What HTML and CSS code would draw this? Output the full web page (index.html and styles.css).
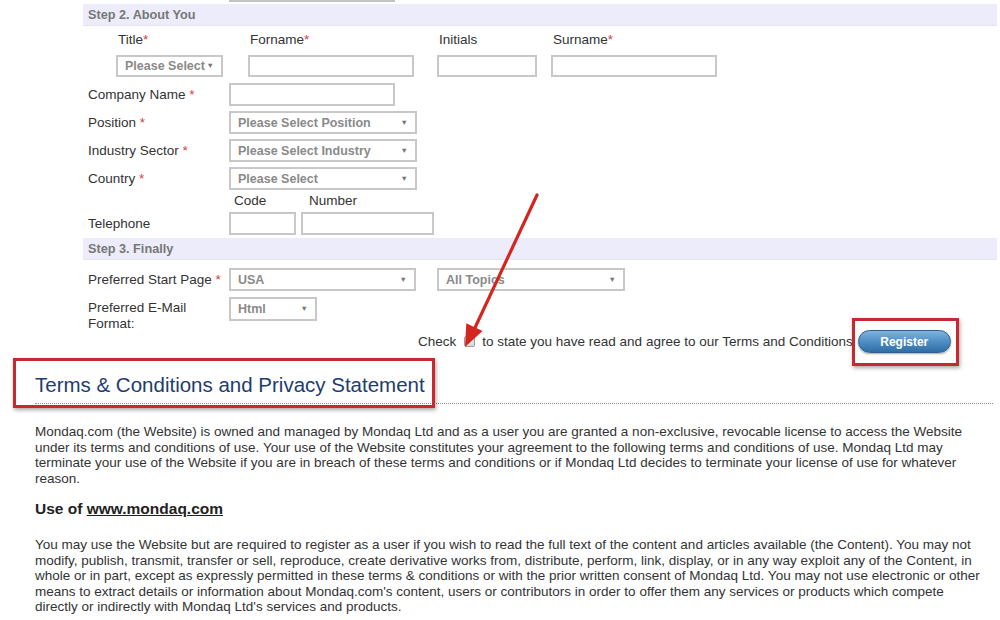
FILE: index.html
```html
<!DOCTYPE html>
<html lang="en">
<head>
<meta charset="utf-8">
<title>Register - Mondaq</title>
<link rel="stylesheet" href="styles.css">
</head>
<body>
<div class="page">
  <div class="form">
    <div class="cut-row"><span class="cut-input"></span></div>

    <div class="step">Step 2. About You</div>

    <div class="name-block">
      <div class="name-col col-title">
        <div class="name-label">Title<span class="req">*</span></div>
        <div class="select sel-title"><span class="sel-text">Please Select</span><span class="caret">&#9660;</span></div>
      </div>
      <div class="name-col col-forname">
        <div class="name-label">Forname<span class="req">*</span></div>
        <div class="input w166"></div>
      </div>
      <div class="name-col col-initials">
        <div class="name-label">Initials</div>
        <div class="input w100"></div>
      </div>
      <div class="name-col col-surname">
        <div class="name-label">Surname<span class="req">*</span></div>
        <div class="input w166"></div>
      </div>
    </div>

    <div class="row r-company">
      <div class="label">Company Name <span class="req">*</span></div>
      <div class="input w166"></div>
    </div>
    <div class="row">
      <div class="label">Position <span class="req">*</span></div>
      <div class="select w188"><span class="sel-text">Please Select Position</span><span class="caret">&#9660;</span></div>
    </div>
    <div class="row">
      <div class="label">Industry Sector <span class="req">*</span></div>
      <div class="select w188"><span class="sel-text">Please Select Industry</span><span class="caret">&#9660;</span></div>
    </div>
    <div class="row">
      <div class="label">Country <span class="req">*</span></div>
      <div class="select w188"><span class="sel-text">Please Select</span><span class="caret">&#9660;</span></div>
    </div>

    <div class="phone-labels">
      <span class="pl-code">Code</span>
      <span class="pl-number">Number</span>
    </div>
    <div class="row r-phone">
      <div class="label">Telephone</div>
      <div class="phone">
        <div class="input w67"></div>
        <div class="input w133"></div>
      </div>
    </div>

    <div class="step step3">Step 3. Finally</div>

    <div class="row r-start">
      <div class="label">Preferred Start Page <span class="req">*</span></div>
      <div class="pair">
        <div class="select w187"><span class="sel-text">USA</span><span class="caret">&#9660;</span></div>
        <div class="select w188"><span class="sel-text">All Topics</span><span class="caret">&#9660;</span></div>
      </div>
    </div>
    <div class="row r-email">
      <div class="label two">Preferred E-Mail Format:</div>
      <div class="select w88"><span class="sel-text">Html</span><span class="caret">&#9660;</span></div>
    </div>

    <div class="check-row">
      <span>Check</span>
      <span class="checkbox"></span>
      <span>to state you have read and agree to our Terms and Conditions</span>
      <span class="btn-wrap">
        <button class="register" type="button">Register</button>
        <span class="mark mark-btn"></span>
      </span>
    </div>
  </div>

  <div class="terms">
    <h1 class="terms-title"><span>Terms &amp; Conditions and Privacy Statement</span><span class="mark mark-title"></span></h1>
    <p>Mondaq.com (the Website) is owned and managed by Mondaq Ltd and as a user you are granted a non-exclusive, revocable license to access the Website under its terms and conditions of use. Your use of the Website constitutes your agreement to the following terms and conditions of use. Mondaq Ltd may terminate your use of the Website if you are in breach of these terms and conditions or if Mondaq Ltd decides to terminate your license of use for whatever reason.</p>
    <h2 class="sub">Use of <a href="#">www.mondaq.com</a></h2>
    <p>You may use the Website but are required to register as a user if you wish to read the full text of the content and articles available (the Content). You may not modify, publish, transmit, transfer or sell, reproduce, create derivative works from, distribute, perform, link, display, or in any way exploit any of the Content, in whole or in part, except as expressly permitted in these terms &amp; conditions or with the prior written consent of Mondaq Ltd. You may not use electronic or other means to extract details or information about Mondaq.com's content, users or contributors in order to offer them any services or products which compete<br>directly or indirectly with Mondaq Ltd's services and products.</p>
  </div>

  <svg class="arrow" width="1000" height="620" viewBox="0 0 1000 620" aria-hidden="true">
    <line x1="537" y1="195" x2="473" y2="332" stroke="#d3261f" stroke-width="3.2" stroke-linecap="round"/>
    <polygon points="465,347 482.5,331 466.3,323.3" fill="#d3261f"/>
  </svg>
</div>
</body>
</html>
```

FILE: styles.css
```css
* { box-sizing: border-box; }

html, body {
  margin: 0;
  padding: 0;
  background: #ffffff;
}

body {
  font-family: "Liberation Sans", Arial, sans-serif;
  color: #333333;
  font-size: 13.5px;
}

.page {
  position: relative;
  width: 1000px;
  height: 620px;
  overflow: hidden;
}

.form {
  margin-left: 83px;
  width: 914px;
}

.cut-row {
  height: 2px;
}
.cut-input {
  display: block;
  margin-left: 146px;
  width: 166px;
  height: 2px;
  background: #c4c4c4;
}

.step {
  margin-top: 2px;
  height: 22px;
  line-height: 22px;
  padding-left: 5px;
  background: #ececfb;
  border-bottom: 1px solid #e4e4f2;
  color: #777777;
  font-weight: bold;
  font-size: 12.7px;
}

.step3 {
  margin-top: 3px;
}

.req {
  color: #d2403b;
}

/* Name block */
.name-block {
  display: flex;
  padding-top: 6px;
  padding-left: 33px;
}
.name-col {
  display: flex;
  flex-direction: column;
  gap: 7px;
}
.col-title { width: 132px; }
.col-forname { width: 189px; }
.col-initials { width: 114px; }
.col-surname { width: 170px; }

.name-label {
  height: 16px;
  line-height: 16px;
  padding-left: 2px;
}

/* Controls */
.input, .select {
  height: 23px;
  border: 2px solid #c8c8c8;
  background: #ffffff;
}
.name-col .input, .name-col .select { height: 22px; }

.w166 { width: 166px; }
.w100 { width: 100px; }
.w67 { width: 67px; }
.w133 { width: 133px; }
.w187 { width: 187px; }
.w188 { width: 188px; }
.w88 { width: 88px; }
.sel-title { width: 107px; }

.select {
  display: flex;
  align-items: center;
  justify-content: space-between;
  padding: 0 7px 0 7px;
}
.sel-text {
  color: #8a8a8a;
  font-weight: bold;
  font-size: 12.5px;
  white-space: nowrap;
}
.caret {
  color: #777777;
  font-size: 7.5px;
  line-height: 1;
}

/* Rows */
.row {
  display: grid;
  grid-template-columns: 146px 1fr;
  align-items: center;
  margin-top: 5px;
}
.r-company { margin-top: 6px; }
.label {
  padding-left: 5px;
  line-height: 16px;
}

.phone-labels {
  display: flex;
  height: 16px;
  line-height: 16px;
  margin-top: 3px;
  padding-left: 151px;
}
.pl-code { width: 75px; }

.r-phone { margin-top: 3px; }
.phone, .pair {
  display: flex;
}
.phone { gap: 5px; }
.pair { gap: 21px; }

.r-start { margin-top: 8px; }
.r-email {
  margin-top: 6px;
  align-items: start;
  height: 34px;
}
.label.two {
  padding-top: 3px;
}
.r-email .select { height: 24px; }

/* Check row */
.check-row {
  display: flex;
  align-items: center;
  margin-top: -1px;
  height: 23px;
  padding-left: 335px;
  white-space: nowrap;
}
.checkbox {
  display: inline-block;
  width: 11px;
  height: 11px;
  margin: 0 7px 0 8px;
  border: 1px solid #9c9c9c;
  border-radius: 2px;
  background: linear-gradient(#f4f4f4, #d8d8d8);
}
.btn-wrap {
  position: relative;
  margin-left: 5px;
  display: inline-flex;
}
.register {
  width: 93px;
  height: 23px;
  border: 1px solid #2f5f8c;
  border-radius: 12px;
  background: linear-gradient(#7fb4df 0%, #4f8fc5 50%, #2f6ea6 100%);
  color: #ffffff;
  font-family: "Liberation Sans", Arial, sans-serif;
  font-weight: bold;
  font-size: 12px;
  box-shadow: 0 1px 2px rgba(0, 0, 0, 0.35);
  padding: 0;
}

.mark {
  position: absolute;
  border: 3px solid #c42a2f;
  box-shadow: 1px 2px 4px rgba(0, 0, 0, 0.35);
  pointer-events: none;
}
.mark-btn {
  left: -6px;
  top: -12px;
  width: 107px;
  height: 48px;
}

/* Terms */
.terms {
  padding: 0 0 0 35px;
}
.terms-title {
  position: relative;
  margin: 20px 7px 0 0;
  padding-bottom: 6px;
  border-bottom: 1px dotted #8c8c8c;
  font-weight: normal;
  font-size: 20.5px;
  line-height: 24px;
  color: #1e3c6e;
}
.mark-title {
  left: -22px;
  top: -15px;
  width: 422px;
  height: 50px;
}

.terms p {
  margin: 20px 0 0 0;
  font-size: 13.5px;
  line-height: 15.5px;
  color: #333333;
}
.terms .sub {
  margin: 14px 0 0 0;
  font-size: 15.5px;
  line-height: 18px;
  font-weight: bold;
  color: #222222;
}
.terms .sub a {
  color: #222222;
  text-decoration: underline;
}
.terms .sub + p {
  margin-top: 19px;
}

.arrow {
  position: absolute;
  left: 0;
  top: 0;
  pointer-events: none;
}
```
